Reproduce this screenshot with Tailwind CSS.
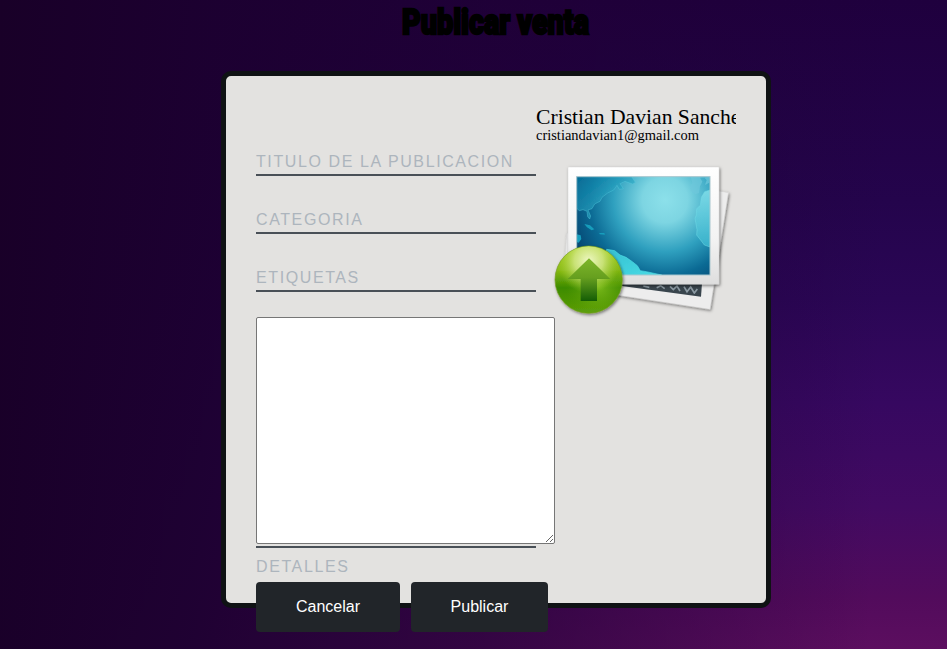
<!DOCTYPE html>
<html lang="es">
<head>
<meta charset="utf-8">
<title>Publicar venta</title>
<script src="https://cdn.jsdelivr.net/npm/@tailwindcss/browser@4"></script>
</head>
<body class="bg-white overflow-hidden">
<main class="w-[947px] h-[649px] bg-[#1f0038] bg-[linear-gradient(92deg,#190028,#1c0030f0_22%,#1f0034a8_52%,#24004000_92%),linear-gradient(180deg,#1f003e,#24044c_31%,#2a0655_46%,#360860_62%,#420a62_78%,#520b5c_92%,#5c0e5f)] flex flex-col items-center pl-[45px] font-['Liberation_Sans',Arial,sans-serif]">
  <h1 class="h-[71px] w-[190px]">
    <svg class="block w-[190px] h-[45px] overflow-visible" viewBox="0 0 190 45">
      <text x="1" y="34" textLength="187" lengthAdjust="spacingAndGlyphs" class="text-[35px] font-black font-[Roboto,sans-serif] fill-black stroke-black stroke-[2.4px]">Publicar venta</text>
    </svg>
  </h1>
  <section class="w-[550px] h-[537px] shrink-0 border-[5px] border-[#0f1214] rounded-[10px] bg-[#e3e2e0] p-[30px] flex">
    <form class="w-[280px] shrink-0 pt-10">
      <div class="flex flex-col gap-7 text-base leading-[32px] tracking-[1.6px] text-[#adb5bd]">
        <div class="h-[30px] border-b-2 border-[#495057]"><label>TITULO DE LA PUBLICACION</label></div>
        <div class="h-[30px] border-b-2 border-[#495057]"><label>CATEGORIA</label></div>
        <div class="h-[30px] border-b-2 border-[#495057]"><label>ETIQUETAS</label></div>
      </div>
      <div class="mt-[25px] h-[231px] border-b-2 border-[#495057]">
        <textarea class="block w-[299px] h-[227px] max-w-none border border-[#767676] rounded-[2px] bg-white resize"></textarea>
      </div>
      <div class="h-[34px] pt-1 leading-[30px] tracking-[1.6px] text-[#adb5bd]">DETALLES</div>
      <div class="flex gap-[11px] w-[292px] text-base text-white">
        <button type="button" class="w-[144px] h-[50px] rounded bg-[#212529]">Cancelar</button>
        <button type="button" class="w-[137px] h-[50px] rounded bg-[#212529]">Publicar</button>
      </div>
    </form>
    <aside class="w-[200px] h-[220px] overflow-hidden text-black font-['Liberation_Serif',Georgia,serif]">
      <svg class="block w-[200px] h-[39px]" viewBox="0 0 200 39">
        <text x="0" y="18" textLength="214" lengthAdjust="spacingAndGlyphs" class="text-[21px]">Cristian Davian Sanchez</text>
        <text x="0" y="34" textLength="163" lengthAdjust="spacingAndGlyphs" class="text-[14.5px]">cristiandavian1@gmail.com</text>
      </svg>
      <svg class="block w-[200px] h-[180px]" viewBox="-12 -30 600 540">
        <defs>
          <radialGradient id="sea" gradientUnits="userSpaceOnUse" cx="375" cy="135" r="310"><stop offset="0" stop-color="#8ce0ea"/><stop offset=".22" stop-color="#7dd5e2"/><stop offset=".5" stop-color="#2fa0bf"/><stop offset=".73" stop-color="#0b6a94"/><stop offset="1" stop-color="#043f6b"/></radialGradient>
          <linearGradient id="paper" x2="0" y2="1"><stop offset="0" stop-color="#fff"/><stop offset=".6" stop-color="#f3f3f3"/><stop offset="1" stop-color="#dedede"/></linearGradient>
          <linearGradient id="ball" x2="0" y2="1"><stop offset="0" stop-color="#a5cf18"/><stop offset=".35" stop-color="#8abb13"/><stop offset=".62" stop-color="#3d8b00"/><stop offset="1" stop-color="#5c9e08"/></linearGradient>
          <radialGradient id="shine" cx=".5" cy=".22" r=".48"><stop offset="0" stop-color="#eff8c5"/><stop offset=".45" stop-color="#d3e887" stop-opacity=".85"/><stop offset="1" stop-color="#a8cf35" stop-opacity="0"/></radialGradient>
          <radialGradient id="glow" cx=".65" cy=".6" r=".5"><stop offset="0" stop-color="#8ac622" stop-opacity=".8"/><stop offset="1" stop-color="#5c9e08" stop-opacity="0"/></radialGradient>
          <linearGradient id="arrow" x2="0" y2="1"><stop offset="0" stop-color="#7eb62a"/><stop offset=".45" stop-color="#669f1f"/><stop offset="1" stop-color="#145d05"/></linearGradient>
          <linearGradient id="coast" x2="1" y2="1"><stop offset="0" stop-color="#0579a3"/><stop offset="1" stop-color="#47c9da"/></linearGradient>
          <linearGradient id="south" x2="1" y2="1"><stop offset="0" stop-color="#35bfd0"/><stop offset="1" stop-color="#49dbe5"/></linearGradient>
          <linearGradient id="east" x2="0" y2="1"><stop offset="0" stop-color="#7fdce8"/><stop offset="1" stop-color="#3ab4cd"/></linearGradient>
          <filter id="shadow" x="-10%" y="-10%" width="125%" height="125%"><feDropShadow dx="3" dy="4" stdDeviation="4" flood-opacity=".5"/></filter>
          <filter id="soft"><feGaussianBlur stdDeviation="1.8"/></filter>
          <clipPath id="frame"><rect x="110" y="65" width="400" height="295"/></clipPath>
        </defs>
        <path d="M80 235L70 395L510 463L565 113L520 105Z" fill="#ededed" stroke="#d0d0d0" filter="url(#shadow)"/>
        <path d="M235 384L486 384L483 425L240 392Z" fill="#39454d"/>
        <path d="M310 393L328 397M350 398L362 392L374 401M390 394L400 404L411 393L420 408M432 395L441 410L452 396L463 414L472 402" fill="none" stroke="#8c9aa3" stroke-width="5" filter="url(#soft)"/>
        <rect x="84" y="36" width="453" height="352" rx="2" fill="url(#paper)" stroke="#c9c9c9" filter="url(#shadow)"/>
        <rect x="110" y="65" width="400" height="295" fill="url(#sea)"/>
        <g clip-path="url(#frame)">
          <path d="M110 65H275L286 82L278 87L255 79L240 86L250 101L238 103L231 91L221 105L203 114L186 127L180 139L164 147L156 161L144 165L152 183L149 192L143 185L141 169L129 164L118 167L110 160Z" fill="url(#coast)" fill-opacity=".62" stroke="#56c9dd" stroke-opacity=".6" stroke-width="2" filter="url(#soft)"/>
          <path d="M133 207L150 211L163 223L155 226L141 217ZM177 234L193 234L195 239L180 238ZM110 238L122 241L124 252L116 263L110 261Z" fill="#189dbc" filter="url(#soft)"/>
          <path d="M200 283L224 287L240 300L258 307L277 320L292 332L301 347L319 350L365 360H190Z" fill="url(#south)" stroke="#4edce6" stroke-width="2" filter="url(#soft)"/>
          <path d="M510 105L494 110L484 127L481 151L470 161L469 180L465 190L471 224L470 240L484 258L493 270L510 276Z" fill="url(#east)" fill-opacity=".9" stroke="#72dce8" stroke-opacity=".7" stroke-width="2" filter="url(#soft)"/>
          <path d="M452 65L457 83L450 93L453 108L466 118L477 114L480 94L487 80L480 68L510 65L508 83L495 90L500 75L490 65Z" fill="#6dc8db" fill-opacity=".7" filter="url(#soft)"/>
        </g>
        <rect x="110" y="65" width="400" height="295" fill="none" stroke="#a7c6ce" stroke-width="3"/>
        <circle cx="146" cy="374" r="101" fill="url(#ball)" stroke="#779d25" stroke-width="2" filter="url(#shadow)"/>
        <circle cx="146" cy="374" r="100" fill="url(#glow)"/>
        <circle cx="146" cy="374" r="100" fill="url(#shine)"/>
        <path d="M147 310L211 372H171V438H122V372H83Z" fill="url(#arrow)"/>
      </svg>
    </aside>
  </section>
</main>
</body>
</html>
